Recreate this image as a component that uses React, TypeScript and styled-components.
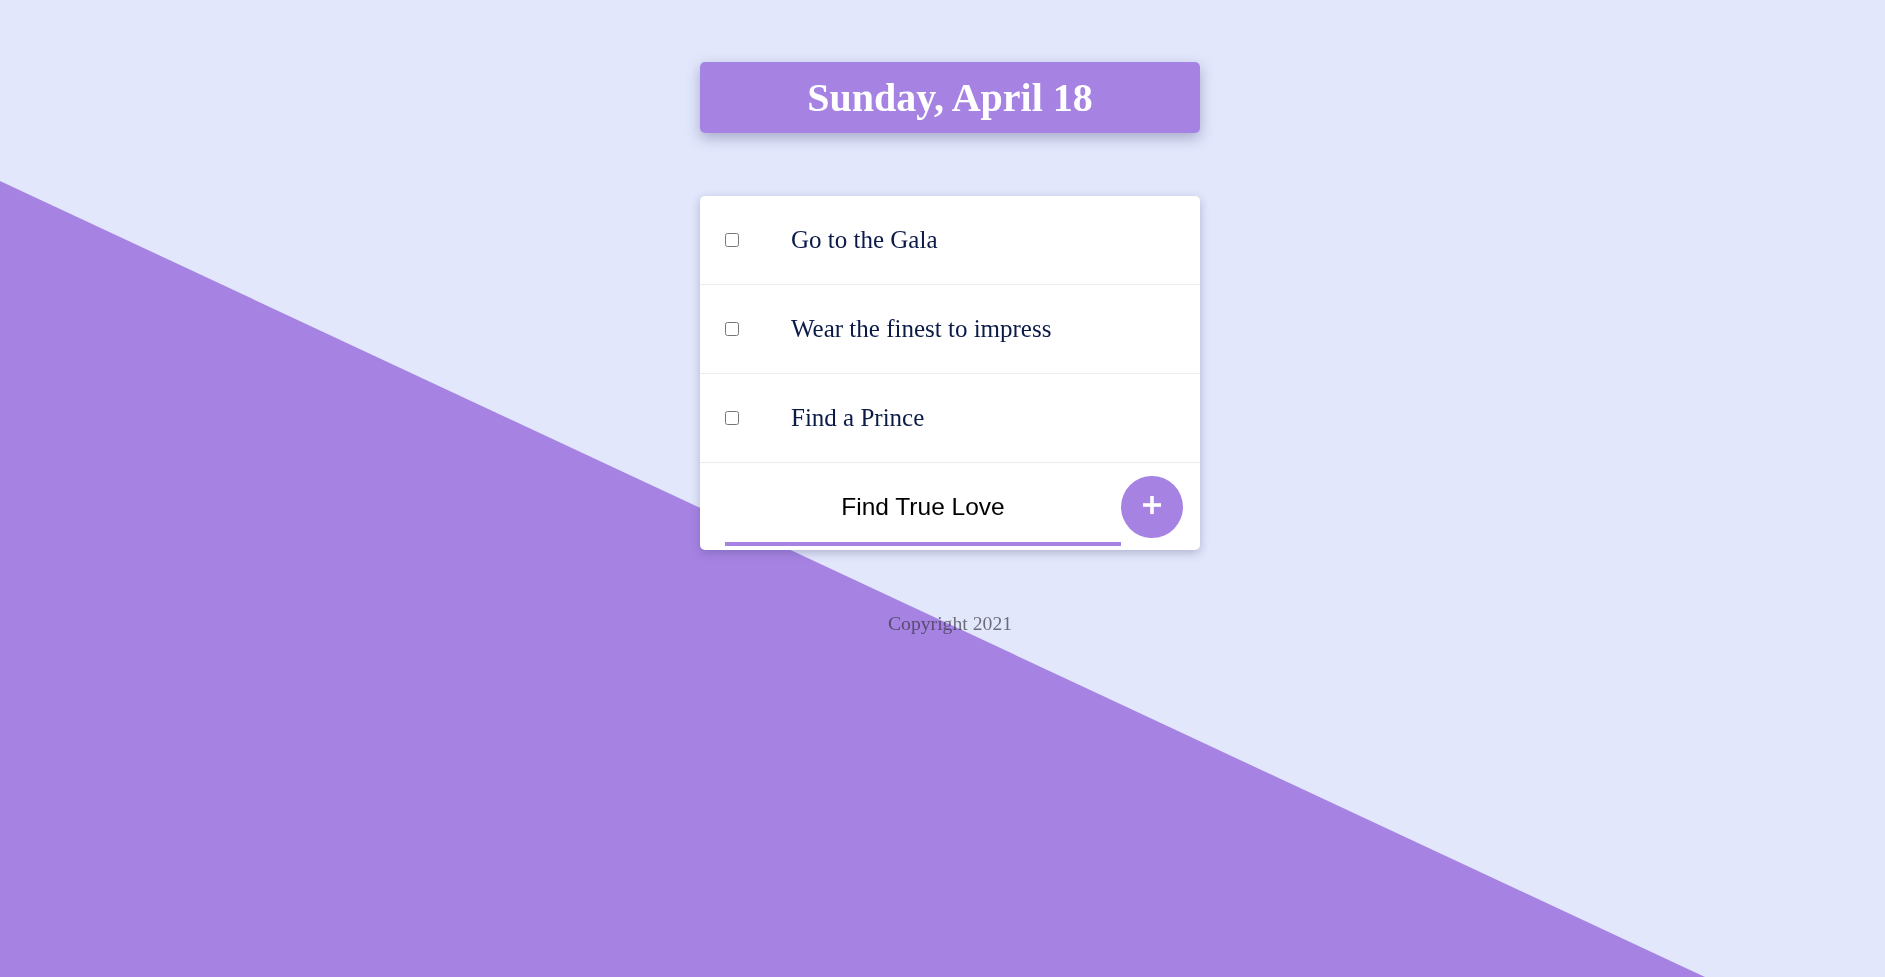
import React from "react";
import styled, { createGlobalStyle } from "styled-components";

const Global = createGlobalStyle`
  html, body {
    margin: 0;
    padding: 0;
    background: #e2e7fc;
    min-height: 100vh;
    font-family: "Liberation Serif", "Times New Roman", serif;
  }
`;

const Backdrop = styled.div`
  position: fixed;
  inset: 0;
  background: #a683e3;
  clip-path: polygon(0 18.53%, 90.45% 100%, 0 100%);
  z-index: 0;
`;

const Page = styled.main`
  position: relative;
  z-index: 1;
  display: flex;
  flex-direction: column;
  align-items: center;
  padding: 62px 0 0 15px;
`;

const Heading = styled.header`
  width: 500px;
  height: 71px;
  display: flex;
  align-items: center;
  justify-content: center;
  background: #a683e3;
  border-radius: 5px;
  box-shadow: 0 5px 14px rgba(60, 60, 110, 0.35);
`;

const Title = styled.h1`
  margin: 0;
  color: #ffffff;
  font-family: "Liberation Serif", "Times New Roman", serif;
  font-weight: 700;
  font-size: 40px;
  line-height: normal;
`;

const Card = styled.section`
  width: 500px;
  margin-top: 63px;
  background: #ffffff;
  border-radius: 5px;
  box-shadow: 0 3px 10px rgba(60, 60, 110, 0.3);
  display: flex;
  flex-direction: column;
`;

const Row = styled.div`
  height: 88px;
  display: flex;
  align-items: center;
  padding-left: 25px;
  border-bottom: 1px solid #ececec;
`;

const Check = styled.input`
  width: 14px;
  height: 14px;
  margin: 0;
`;

const Label = styled.span`
  margin-left: 52px;
  color: #0c1a48;
  font-family: "Liberation Serif", "Times New Roman", serif;
  font-size: 25px;
  line-height: normal;
`;

const Form = styled.form`
  height: 87px;
  display: flex;
  align-items: flex-end;
  padding: 0 17px 4px 25px;
  box-sizing: border-box;
`;

const Field = styled.input`
  flex: 1;
  min-width: 0;
  border: none;
  border-bottom: 4px solid #a683e3;
  outline: none;
  background: transparent;
  padding: 8px 0 21px;
  text-align: center;
  color: #000;
  font-family: "Liberation Sans", Arial, sans-serif;
  font-size: 24.5px;
  line-height: normal;
`;

const AddButton = styled.button`
  width: 62px;
  height: 62px;
  margin-bottom: 8px;
  border: none;
  border-radius: 50%;
  background: #a683e3;
  display: flex;
  align-items: center;
  justify-content: center;
  padding: 0 0 5px;
  cursor: pointer;
`;

const Footer = styled.p`
  margin: 62px 0 0;
  color: rgba(50, 50, 60, 0.68);
  font-family: "Liberation Serif", "Times New Roman", serif;
  font-size: 19.7px;
  line-height: normal;
`;

const items = ["Go to the Gala", "Wear the finest to impress", "Find a Prince"];

export default function App() {
  return (
    <>
      <Global />
      <Backdrop />
      <Page>
        <Heading>
          <Title>Sunday, April 18</Title>
        </Heading>
        <Card>
          {items.map((t) => (
            <Row key={t}>
              <Check type="checkbox" />
              <Label>{t}</Label>
            </Row>
          ))}
          <Form onSubmit={(e) => e.preventDefault()}>
            <Field type="text" defaultValue="Find True Love" />
            <AddButton type="submit" aria-label="Add">
              <svg width="18" height="18" viewBox="0 0 18 18">
                <rect x="0" y="7.2" width="18" height="3.6" fill="#fff" />
                <rect x="7.2" y="0" width="3.6" height="18" fill="#fff" />
              </svg>
            </AddButton>
          </Form>
        </Card>
        <Footer>Copyright 2021</Footer>
      </Page>
    </>
  );
}
